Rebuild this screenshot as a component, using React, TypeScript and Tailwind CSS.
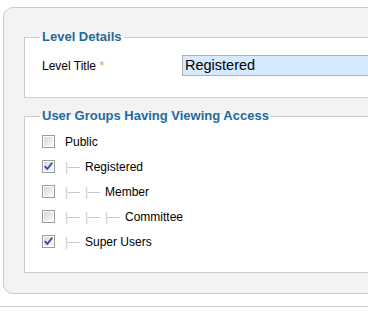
import React from "react";

const GROUPS = [
  { label: "Public", level: 0, checked: false },
  { label: "Registered", level: 1, checked: true },
  { label: "Member", level: 2, checked: false },
  { label: "Committee", level: 3, checked: false },
  { label: "Super Users", level: 1, checked: true },
];

function Checkbox({ checked }: { checked: boolean }) {
  return (
    <svg width="13" height="13" viewBox="0 0 13 13" className="shrink-0">
      <defs>
        <linearGradient id="cb" x1="0" y1="0" x2="1" y2="1">
          <stop offset="0" stopColor="#d6d6d6" />
          <stop offset="1" stopColor="#fbfbfb" />
        </linearGradient>
      </defs>
      <rect x="0.5" y="0.5" width="12" height="12" fill="#fff" stroke="#9b9b9b" />
      <rect x="2" y="2" width="9" height="9" fill="url(#cb)" />
      {checked && (
        <path
          d="M3.2 6.6 L5.3 9 L9.8 3.2"
          fill="none"
          stroke="#2a4a9e"
          strokeWidth="1.8"
          strokeLinecap="round"
          strokeLinejoin="round"
        />
      )}
    </svg>
  );
}

export default function App() {
  return (
    <div
      className="h-[327px] w-[368px] overflow-hidden bg-white text-[12px] text-black"
      style={{ fontFamily: '"Liberation Sans", Arial, sans-serif' }}
    >
      <div className="pl-[3px] pt-[7px]">
        <div className="w-[420px] rounded-l-[10px] border border-[#cccccc] bg-[#f3f3f3] pb-[20px] pl-[20px] pt-[21px]">
          {/* Level details */}
          <fieldset className="border border-[#cccccc] bg-white pb-[21px] pl-[15px]">
            <legend className="px-[2px] text-[13px] font-bold leading-[16px] text-[#1d6a9c]">
              Level Details
            </legend>
            <div className="ml-[2px] mt-[10px] flex h-[21px] items-center">
              <span className="w-[140px]">
                Level Title <span className="text-[#e3974a]">*</span>
              </span>
              <div className="flex h-[21px] w-[260px] items-center border border-[#a9b3bd] bg-[#d5eafd] pl-[2px] text-[14.5px]">
                Registered
              </div>
            </div>
          </fieldset>

          {/* Viewing access */}
          <fieldset className="mt-[10px] border border-[#cccccc] bg-white pb-[18px] pl-[15px]">
            <legend className="px-[2px] text-[13px] font-bold leading-[16px] text-[#1d6a9c]">
              User Groups Having Viewing Access
            </legend>
            <ul className="mt-[5px] pl-[2px]">
              {GROUPS.map((g) => (
                <li key={g.label} className="flex h-[25px] items-center">
                  <Checkbox checked={g.checked} />
                  <span className="ml-[10px] flex items-center">
                    {Array.from({ length: g.level }).map((_, i) => (
                      <span key={i} className="w-[20px] text-[#c8c8c8]">
                        |—
                      </span>
                    ))}
                    <span>{g.label}</span>
                  </span>
                </li>
              ))}
            </ul>
          </fieldset>
        </div>
      </div>
      <div className="mt-[12px] border-t border-[#cccccc]" />
    </div>
  );
}
